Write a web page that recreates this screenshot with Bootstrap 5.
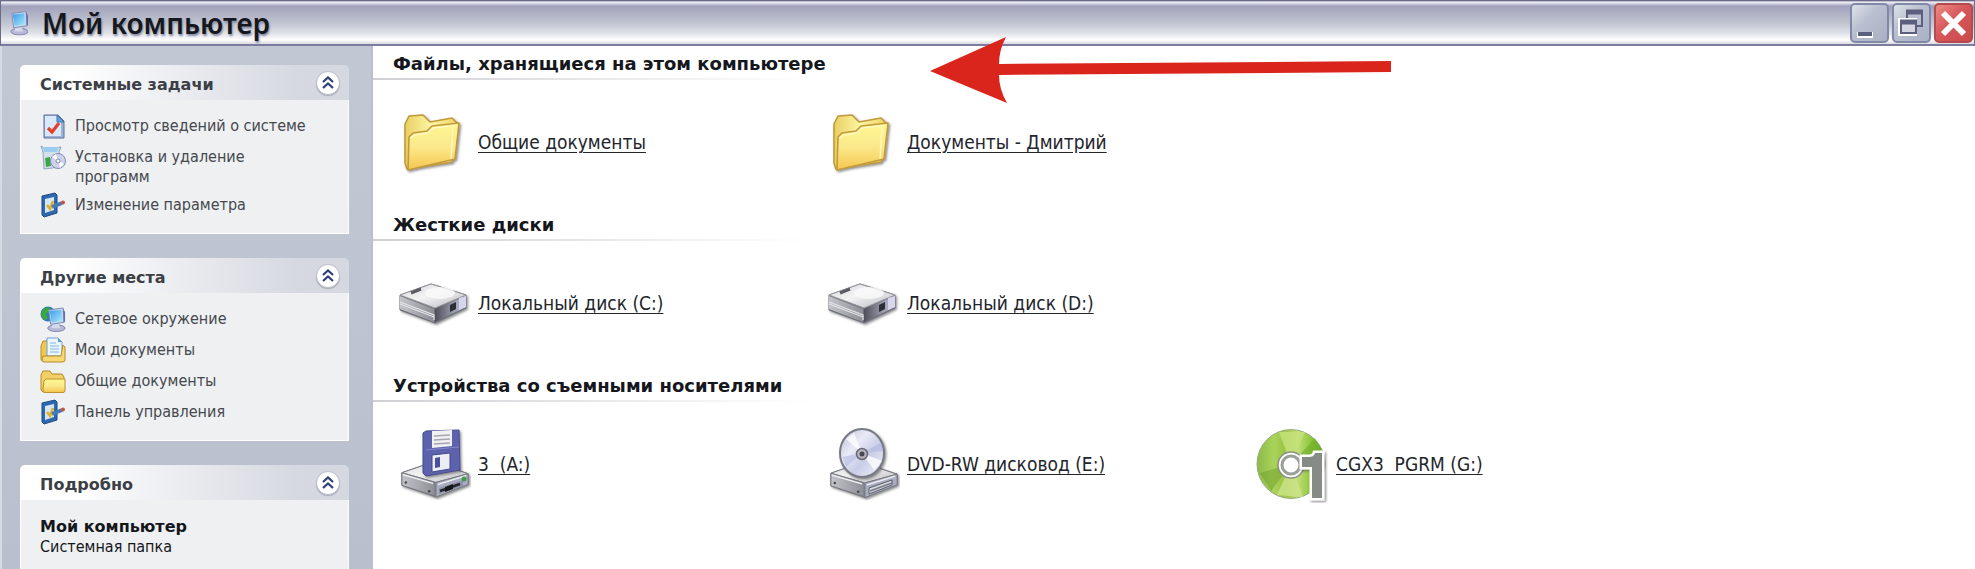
<!DOCTYPE html>
<html lang="ru">
<head>
<meta charset="utf-8">
<meta name="viewport" content="width=device-width, initial-scale=1">
<title>Мой компьютер</title>
<link rel="stylesheet" href="https://cdn.jsdelivr.net/npm/bootstrap@5.3.0/dist/css/bootstrap.min.css">
<style>
  body { font-family: "DejaVu Sans Condensed", "DejaVu Sans", sans-serif; color: #15171c; background: #fff; }
  a { color: inherit; }
  .titlebar {
    height: 46px; padding: 0 1px 0 7px;
    border: 1px solid #6a6a8a; border-bottom: 2px solid #7c7ca0;
    background: linear-gradient(#8c8ca8 0, #f2f2f8 1px, #e0e0ec 2px, #a2a2bc 5px, #a8a9c0 9px, #c3c7d1 23px, #dfe1e8 32px, #fff 39px, #f4f4f6 40px, #d8d8e0 43px);
  }
  .titlebar h1 { font: 600 28px/1 "Noto Sans", sans-serif; text-shadow: 1px 2px 2px #8b8fa5; color: #15181d; padding-left: 14px; }
  .winbtns { gap: 3px; }
  .winbtn { width: 39px; height: 40px; padding: 0; border: 2px solid #8289a6; border-radius: 5px; background: linear-gradient(135deg, #dfe2ea, #b9c0d0 40%, #a9b0c4); }
  .winbtn.shut { border-color: #b5494d; background: linear-gradient(135deg, #eb8c84, #d7575a 45%, #c94a4d); }
  .winbtn svg { display: block; width: 100%; height: 100%; }
  .tasks { width: 373px; padding: 19px 22px 0 18px; gap: 24px; background: linear-gradient(#c2c8d3, #b9bfcd); border-left: 2px solid #d8dae3; border-right: 2px solid #b9bfcc; }
  .group-head { height: 35px; padding: 0 9px 0 20px; border-radius: 5px 5px 0 0; background: linear-gradient(90deg, #fff 15%, #d5d8e0 85%); }
  .group-head h2 { font-size: 16px; font-weight: 700; color: #3c3f45; padding-top: 4px; }
  .group-head h2, .section-name, .about strong { font-family: "DejaVu Sans", sans-serif; }
  .fold { width: 24px; height: 24px; padding: 0; border: 1px solid #bcc0cc; border-radius: 50%; background: #fff; box-shadow: 0 1px 1px #a5a9b5; }
  .group-body { border: 1px solid #fff; border-top: 0; background: #eff0f2; padding: 13px 19px 15px; color: #45484e; font-size: 16px; line-height: 20px; }
  .group-body ul { gap: 5px; }
  .group-body li svg { width: 26px; height: 26px; }
  .group-body a { text-decoration: none; padding-top: 3px; padding-left: 1px; }
  .about { color: #15171c; padding-top: 17px; padding-bottom: 60px; }
  .section-name { height: 34px; padding: 0 20px; font-size: 18px; font-weight: 700; line-height: 36px; margin: 0;
    background: linear-gradient(90deg, #cfd0d4, #fff) 0 100% / 440px 2px no-repeat; }
  .section-body { height: 127px; padding: 0 0 2px 24px; }
  .entry { width: 429px; gap: 7px; font-size: 19px; color: #22252c; text-underline-offset: 3px; }
  .entry svg { width: 74px; height: 76px; flex: none; }
  .pointer { position: absolute; left: 930px; top: 37px; width: 462px; height: 67px; pointer-events: none; }
</style>
</head>
<body class="vh-100 overflow-hidden position-relative d-flex flex-column">

<svg width="0" height="0" class="position-absolute" aria-hidden="true">
  <defs>
    <linearGradient id="gFold" x1="0" y1="0" x2="0" y2="1"><stop offset="0" stop-color="#fdf791"/><stop offset=".5" stop-color="#fbe98c"/><stop offset="1" stop-color="#f4c64f"/></linearGradient>
    <linearGradient id="gBack" x1="0" y1="0" x2="1" y2="0"><stop offset="0" stop-color="#e9cf62"/><stop offset=".5" stop-color="#fdf6a4"/><stop offset="1" stop-color="#efd060"/></linearGradient>
    <linearGradient id="gTop" x1="0" y1="0" x2="1" y2="1"><stop offset="0" stop-color="#d5d6d8"/><stop offset=".45" stop-color="#f3f3f4"/><stop offset="1" stop-color="#b9babf"/></linearGradient>
    <linearGradient id="gLeft" x1="0" y1="0" x2="1" y2="0"><stop offset="0" stop-color="#c3c4c9"/><stop offset="1" stop-color="#8d8f96"/></linearGradient>
    <linearGradient id="gRight" x1="0" y1="0" x2="1" y2="0"><stop offset="0" stop-color="#4d4f58"/><stop offset=".6" stop-color="#9a9cab"/><stop offset="1" stop-color="#c4c6e4"/></linearGradient>
    <linearGradient id="gDisc" x1="0" y1="0" x2="1" y2="1"><stop offset="0" stop-color="#b9bdd6"/><stop offset=".35" stop-color="#e9ebf6"/><stop offset=".6" stop-color="#c9cde6"/><stop offset="1" stop-color="#f4f5fb"/></linearGradient>
    <linearGradient id="gGreen" x1="0" y1="0" x2="1" y2="0"><stop offset="0" stop-color="#8cb94a"/><stop offset=".25" stop-color="#a9d35a"/><stop offset=".4" stop-color="#9cc544"/><stop offset=".6" stop-color="#c0dd78"/><stop offset=".8" stop-color="#8cc63a"/><stop offset="1" stop-color="#6fae2b"/></linearGradient>
    <linearGradient id="gScreen" x1="0" y1="0" x2="1" y2="1"><stop offset="0" stop-color="#3d9ae8"/><stop offset="1" stop-color="#a8ecfb"/></linearGradient>
    <filter id="soft" x="-20%" y="-20%" width="150%" height="150%"><feDropShadow dx="1.5" dy="1.5" stdDeviation="1.2" flood-color="#444" flood-opacity=".6"/></filter>

    <symbol id="folder" viewBox="0 0 74 76">
      <g filter="url(#soft)" stroke="#c39a3a" stroke-width="1.6" stroke-linejoin="round">
        <path d="M8 19 12 11 26 10 33 17 55 13 57 15 61 19 55 57 10 64 8 58Z" fill="url(#gBack)"/>
        <path d="M12 32 16 28 30 26 35 21 62 18 58 54 11 65Z" fill="url(#gFold)"/>
      </g>
      <path d="M14 33 18 30 31 28 36 23 58 20.500" fill="none" stroke="#fffbd0" stroke-width="1.200"/>
      <path d="M56 22 54 54" stroke="#fff7b8" stroke-width="1.500"/>
    </symbol>

    <symbol id="drive" viewBox="0 0 74 76">
      <g filter="url(#soft)" stroke-linejoin="round">
        <path d="M3 29 34 18 69 29 69 42 38 57 3 44Z" fill="#6e7078" stroke="#6e7078"/>
        <path d="M3 29 34 18 69 29 38 42Z" fill="url(#gTop)" stroke="#96989e"/>
        <path d="M3 30 37 43 37 56 3 43Z" fill="url(#gLeft)"/>
        <path d="M38 43 69 30 69 41 38 56Z" fill="url(#gRight)"/>
      </g>
      <ellipse cx="43" cy="27" rx="15" ry="6" fill="#fafafa" opacity=".8"/>
      <path d="M14 27 24 23" stroke="#5a5c62" stroke-width="3"/>
      <path d="M3 36 37 49 37 54 M3 38 37 51" fill="none" stroke="#e3e4e8" stroke-width="1.200"/>
      <path d="M53 39 59 36 59 43 53 46Z" fill="#2c2e36"/>
      <path d="M62 32 69 30 69 41 62 44Z" fill="#d6d7ef"/>
    </symbol>

    <symbol id="base" viewBox="0 0 74 40">
      <g filter="url(#soft)" stroke="#777982" stroke-linejoin="round">
        <path d="M3 12 35 1 71 13 71 24 38 37 3 25Z" fill="#8a8c94"/>
        <path d="M3 12 35 1 71 13 38 22Z" fill="url(#gTop)"/>
        <path d="M3 12 37 22 37 36 3 25Z" fill="url(#gLeft)"/>
        <path d="M38 22 71 13 71 24 38 37Z" fill="#aaadc2"/>
      </g>
      <path d="M4 14 35 23 M40 24 69 15" stroke="#f2f2f5" stroke-width="1.500"/>
      <circle cx="7" cy="22" r="1.300" fill="#44464c"/><circle cx="31" cy="31" r="1.300" fill="#44464c"/>
    </symbol>

    <symbol id="floppy" viewBox="0 0 74 76">
      <svg x="2" y="34" width="72" height="39" viewBox="0 0 74 40"><use href="#base" width="74" height="40"/></svg>
      <path d="M42 61 66 53 66 59 42 67Z" fill="#8f92ad"/>
      <path d="M43 64 63 57" stroke="#23252b" stroke-width="2.500"/><path d="M48 60 56 57 56 62 48 65Z" fill="#15161a"/>
      <circle cx="67" cy="52" r="2.500" fill="#3f9d45"/>
      <g filter="url(#soft)"><path d="M26 6 29 4 62 3 63 43 29 49 26 46Z" fill="#5d62ad" stroke="#474b8e"/></g>
      <path d="M35 4 55 3 55 19 35 21Z" fill="#f1f1f4"/>
      <path d="M37 9 53 8 M37 13 53 12 M37 17 53 16" stroke="#a5a6b0" stroke-width="1.500"/>
      <path d="M35 28 53 26 53 42 35 45Z" fill="#eceef6" stroke="#42468a"/>
      <path d="M38 31 43 30 43 40 38 41Z" fill="#4b4f9b"/>
      <path d="M29 23 62 20" stroke="#8388cd"/>
    </symbol>

    <symbol id="dvd" viewBox="0 0 74 76">
      <svg x="2" y="34" width="72" height="40" viewBox="0 0 74 40"><use href="#base" width="74" height="40"/></svg>
      <path d="M43 61 66 53 66 58 43 67Z" fill="#d4d6df" stroke="#5b5d66"/><path d="M44 64 66 56" stroke="#777a85" stroke-width="1.500"/>
      <g filter="url(#soft)"><ellipse cx="36" cy="26" rx="22" ry="24" fill="url(#gDisc)" stroke="#777984" stroke-width="2"/></g>
      <path d="M36 26 20 12 28 6Z M36 26 56 34 48 43Z" fill="#fff" opacity=".75"/>
      <path d="M36 26 16 30 20 40Z M36 26 55 16 57 24Z" fill="#aab2e0" opacity=".5"/>
      <circle cx="36" cy="27" r="5.500" fill="#b9b4c0" stroke="#666873" stroke-width="1.500"/><circle cx="36" cy="27" r="2.500" fill="#44464f"/>
    </symbol>

    <symbol id="corel" viewBox="0 0 74 76">
      <ellipse cx="36" cy="37" rx="34" ry="34.500" fill="url(#gGreen)" stroke="#9aa878"/>
      <path d="M36 37 24 5 50 5Z" fill="#c6e27c" opacity=".8"/><path d="M36 37 22 68 48 70Z" fill="#cde489" opacity=".8"/>
      <path d="M36 37 60 11 69 26Z" fill="#68a824" opacity=".5"/><path d="M36 37 5 46 16 64Z" fill="#6f9e2c" opacity=".5"/>
      <circle cx="36" cy="38" r="13" fill="#fff" stroke="#8b9188" stroke-width="1.500"/>
      <circle cx="36" cy="38" r="9" fill="#fff" stroke="#9b9f99" stroke-width="3"/>
      <g filter="url(#soft)"><path d="M54 30Q59 30 60 26H67V71H57V40H47V30Z" fill="#fff" stroke="#fff" stroke-width="5"/></g>
      <path d="M54 30Q59 30 60 26H67V71H57V40H47V30Z" fill="#868b86"/>
    </symbol>

    <symbol id="pc" viewBox="0 0 26 26">
      <ellipse cx="16" cy="22" rx="9" ry="3.500" fill="#b6b8d6" stroke="#7f82ab"/>
      <path d="M12 16 18 16 20 22 11 22Z" fill="#d6d8ec"/>
      <path d="M8 3 23 1 24 16 10 18Z" fill="#c3d8ee" stroke="#7c8ab5"/>
      <path d="M9 4 21 3 22 14 11 16Z" fill="url(#gScreen)"/>
      <path d="M23 2 25 5 25 15 23.500 16Z" fill="#6670ae"/>
    </symbol>
    <symbol id="net" viewBox="0 0 26 26">
      <circle cx="8" cy="8" r="7.500" fill="#2f79c4"/><path d="M1 8Q3 1 9 1L10 5 6 8 8 12 5 14Q1 12 1 8Z" fill="#3ba83e"/>
      <use href="#pc" x="1" y="1" width="25" height="25"/>
    </symbol>
    <symbol id="check" viewBox="0 0 26 26">
      <path d="M4 2H18L24 8V25H4Z" fill="#9db4d8" stroke="#5d6f96"/><path d="M5 3H17V9H21V23H5Z" fill="#d9e8fa"/>
      <path d="M17 2 24 9H17Z" fill="#5ba4e4" stroke="#4474ac"/>
      <path d="M8 15 12 19 19 10" fill="none" stroke="#e2402b" stroke-width="3.200"/>
    </symbol>
    <symbol id="install" viewBox="0 0 26 26">
      <path d="M1 2 6 5 21 3 19 8 20 23 4 25 3 8Z" fill="#d3e0ec" stroke="#8fa4ba"/><path d="M3 3 19 3 17 8 4 8Z" fill="#9bcdf0"/>
      <path d="M5 14 10 13 11 22 6 23Z" fill="#37a845"/>
      <circle cx="18" cy="17" r="7.500" fill="#ccd2ec" stroke="#848bb2"/><path d="M18 17 12 13 16 10Z M18 17 24 20 20 24Z" fill="#fff"/><circle cx="18" cy="17" r="2" fill="#fff" stroke="#858aa8"/>
    </symbol>
    <symbol id="panel" viewBox="0 0 26 26">
      <path d="M2 4 15 1 17 3 17 21 4 25 2 23Z" fill="#2e69b0" stroke="#1f4983"/>
      <path d="M5 7 14 5 14 18 5 21Z" fill="#d5e8fa"/>
      <path d="M7 13 10 17 13 9" fill="none" stroke="#e0b02a" stroke-width="2.500"/>
      <path d="M12 15 22 11" stroke="#4679b8" stroke-width="4"/><circle cx="23" cy="10.500" r="2" fill="#c6553d"/>
    </symbol>
    <symbol id="mydocs" viewBox="0 0 26 26">
      <path d="M1 9 3 4 8 4 8 22 3 24Q1 24 1 22Z" fill="#f0c851" stroke="#b58a28"/>
      <path d="M7 1H18L22 5V19H7Z" fill="#eaf5fe" stroke="#6ba0cf"/><path d="M18 1 22 5H18Z" fill="#5a9bd5"/>
      <path d="M10 6H16M10 9H19M10 12H19M10 15H19" stroke="#84b4dc"/>
      <path d="M3 19H21L23 8 25 10V23Q25 25 22 25H4Q1 25 3 19Z" fill="#f7d872" stroke="#b58a28"/>
    </symbol>
    <symbol id="shared" viewBox="0 0 26 26">
      <path d="M1 7 3 3H10L12 6H22L24 9V24H3L1 22Z" fill="#f3d067" stroke="#b58a28" stroke-linejoin="round"/>
      <path d="M4 13 6 11H25V22Q25 24.500 23 24.500H5Q3 24.500 3 22Z" fill="url(#gFold)" stroke="#bb922e"/>
    </symbol>
    <symbol id="chev" viewBox="0 0 22 22">
      <path d="M6 10 11 5.500 16 10M6 16 11 11.500 16 16" fill="none" stroke="#2f3f78" stroke-width="2.200"/>
    </symbol>
  </defs>
</svg>

<header class="titlebar d-flex align-items-center flex-shrink-0">
  <svg width="20" height="26" viewBox="4 0 21 26" aria-hidden="true"><use href="#pc" width="26" height="26"/></svg>
  <h1 class="mb-0 flex-grow-1 text-nowrap">Мой компьютер</h1>
  <div class="winbtns d-flex">
    <button type="button" class="winbtn" aria-label="Свернуть"><svg viewBox="0 0 35 36"><path d="M5 27H21V33H5Z" fill="#fff"/><path d="M6 27H20V31H6Z" fill="#5c607f"/></svg></button>
    <button type="button" class="winbtn" aria-label="Восстановить"><svg viewBox="0 0 35 36"><path d="M13 6H28V21H13Z" fill="#b9bfce" stroke="#5c607f" stroke-width="2"/><path d="M12 7H29" stroke="#5c607f" stroke-width="5"/><path d="M5 14H22V30H5Z" fill="#c8ccd9" stroke="#fff" stroke-width="2"/><path d="M7 16H22V28H7Z" fill="#d3d6e0" stroke="#5c607f" stroke-width="2"/><path d="M6 17H23" stroke="#5c607f" stroke-width="5"/></svg></button>
    <button type="button" class="winbtn shut" aria-label="Закрыть"><svg viewBox="0 0 35 36"><path d="M7 8 28 29M28 8 7 29" stroke="#fff" stroke-width="6"/></svg></button>
  </div>
</header>

<div class="d-flex flex-grow-1 overflow-hidden">
  <aside class="tasks d-flex flex-column flex-shrink-0">
    <section>
      <div class="group-head d-flex align-items-center justify-content-between">
        <h2 class="mb-0">Системные задачи</h2>
        <button type="button" class="fold" aria-label="Свернуть: Системные задачи"><svg class="d-block" width="22" height="22"><use href="#chev"/></svg></button>
      </div>
      <div class="group-body">
        <ul class="list-unstyled d-flex flex-column mb-0">
          <li class="d-flex gap-2"><svg class="flex-shrink-0"><use href="#check"/></svg><a href="#">Просмотр сведений о системе</a></li>
          <li class="d-flex gap-2"><svg class="flex-shrink-0"><use href="#install"/></svg><a href="#">Установка и удаление<br>программ</a></li>
          <li class="d-flex gap-2"><svg class="flex-shrink-0"><use href="#panel"/></svg><a href="#">Изменение параметра</a></li>
        </ul>
      </div>
    </section>
    <section>
      <div class="group-head d-flex align-items-center justify-content-between">
        <h2 class="mb-0">Другие места</h2>
        <button type="button" class="fold" aria-label="Свернуть: Другие места"><svg class="d-block" width="22" height="22"><use href="#chev"/></svg></button>
      </div>
      <div class="group-body">
        <ul class="list-unstyled d-flex flex-column mb-0">
          <li class="d-flex gap-2"><svg class="flex-shrink-0"><use href="#net"/></svg><a href="#">Сетевое окружение</a></li>
          <li class="d-flex gap-2"><svg class="flex-shrink-0"><use href="#mydocs"/></svg><a href="#">Мои документы</a></li>
          <li class="d-flex gap-2"><svg class="flex-shrink-0"><use href="#shared"/></svg><a href="#">Общие документы</a></li>
          <li class="d-flex gap-2"><svg class="flex-shrink-0"><use href="#panel"/></svg><a href="#">Панель управления</a></li>
        </ul>
      </div>
    </section>
    <section>
      <div class="group-head d-flex align-items-center justify-content-between">
        <h2 class="mb-0">Подробно</h2>
        <button type="button" class="fold" aria-label="Свернуть: Подробно"><svg class="d-block" width="22" height="22"><use href="#chev"/></svg></button>
      </div>
      <div class="group-body about"><strong>Мой компьютер</strong><br>Системная папка</div>
    </section>
  </aside>

  <main class="flex-grow-1">
    <section>
      <h2 class="section-name">Файлы, хранящиеся на этом компьютере</h2>
      <div class="section-body d-flex flex-wrap align-items-center">
        <a href="#" class="entry d-flex align-items-center"><svg><use href="#folder"/></svg>Общие документы</a>
        <a href="#" class="entry d-flex align-items-center"><svg><use href="#folder"/></svg>Документы - Дмитрий</a>
      </div>
    </section>
    <section>
      <h2 class="section-name">Жесткие диски</h2>
      <div class="section-body d-flex flex-wrap align-items-center">
        <a href="#" class="entry d-flex align-items-center"><svg><use href="#drive"/></svg>Локальный диск (C:)</a>
        <a href="#" class="entry d-flex align-items-center"><svg><use href="#drive"/></svg>Локальный диск (D:)</a>
      </div>
    </section>
    <section>
      <h2 class="section-name">Устройства со съемными носителями</h2>
      <div class="section-body d-flex flex-wrap align-items-center">
        <a href="#" class="entry d-flex align-items-center"><svg><use href="#floppy"/></svg>3&nbsp; (A:)</a>
        <a href="#" class="entry d-flex align-items-center"><svg><use href="#dvd"/></svg>DVD-RW дисковод (E:)</a>
        <a href="#" class="entry d-flex align-items-center"><svg><use href="#corel"/></svg>CGX3&nbsp; PGRM (G:)</a>
      </div>
    </section>
  </main>
</div>

<svg class="pointer" viewBox="0 0 462 67" aria-hidden="true"><path d="M0 34 76 0Q69 13 69 27L461 24V35L69 38Q69 52 77 66Z" fill="#da251d"/></svg>

<script src="https://cdn.jsdelivr.net/npm/bootstrap@5.3.0/dist/js/bootstrap.bundle.min.js"></script>
</body>
</html>
